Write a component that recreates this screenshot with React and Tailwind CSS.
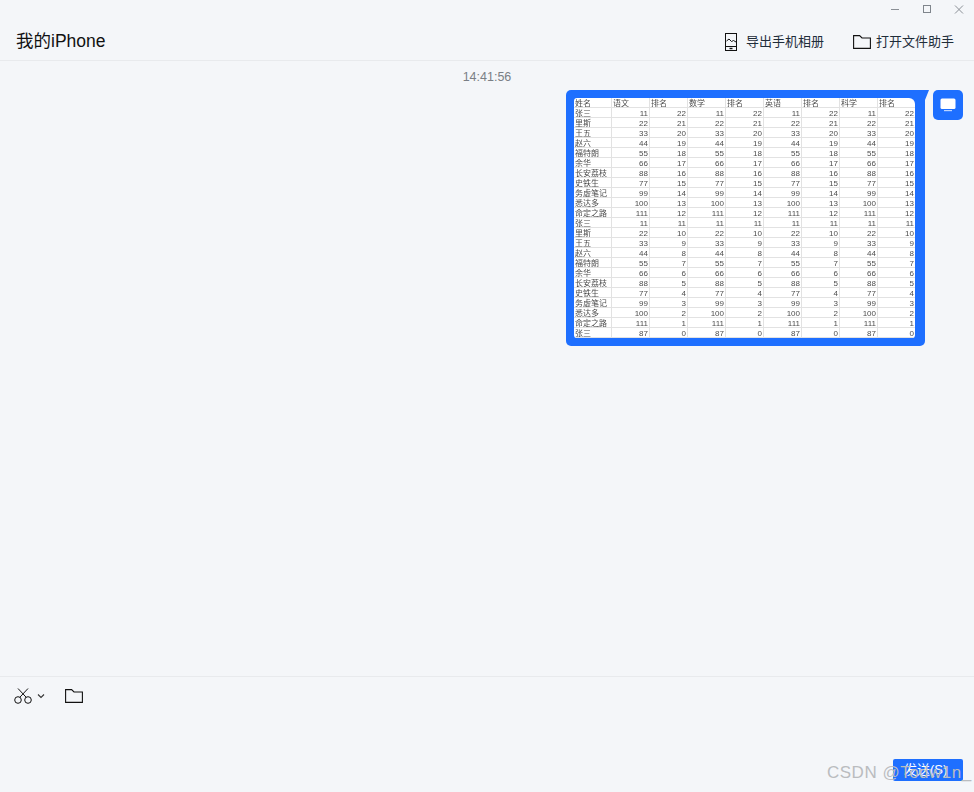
const names = ['张三', '里斯', '王五', '赵六', '福特朗', '余华', '长安荔枝', '史铁生', '务虚笔记', '悉达多', '命定之路'];
const scores = [11, 22, 33, 44, 55, 66, 88, 77, 99, 100, 111];
const headers = ['姓名', '语文', '排名', '数学', '排名', '英语', '排名', '科学', '排名'];

const rows = [];
for (let i = 0; i < 23; i++) {
  const n = i === 22 ? 0 : i % 11;
  rows.push({ name: names[n], score: i === 22 ? 87 : scores[n], rank: 22 - i });
}

function Cell({ children, right, head }) {
  return (
    <div className={`h-[10px] border-r border-b border-[#e2e2e2] px-[1px] overflow-hidden whitespace-nowrap ${head ? 'leading-[11px]' : 'leading-[12px]'} ${right ? 'text-right' : 'text-left'}`}>
      {children}
    </div>
  );
}

function SheetPreview() {
  return (
    <div className="grid grid-cols-[repeat(9,38px)] w-[341px] h-[240px] bg-white rounded-tl-[3px] rounded-tr-[6px] rounded-b-[3px] overflow-hidden text-[8px] text-[#4d4d4d] blur-[0.3px] font-['Liberation_Sans','Noto_Sans_CJK_SC',sans-serif]">
      {headers.map((h, i) => (
        <Cell key={i} head>{h}</Cell>
      ))}
      {rows.map((r, i) => (
        <div key={i} className="contents">
          <Cell>{r.name}</Cell>
          {[0, 1, 2, 3].map((c) => (
            <div key={c} className="contents">
              <Cell right>{r.score}</Cell>
              <Cell right>{r.rank}</Cell>
            </div>
          ))}
        </div>
      ))}
    </div>
  );
}

function FolderIcon({ className }) {
  return (
    <svg viewBox="0 0 18 14" className={className} fill="none" stroke="#111111" strokeWidth="1.1">
      <path d="M0.6 0.6 H6.6 L9 3 H17.4 V13.4 H0.6 Z" />
    </svg>
  );
}

export default function App() {
  return (
    <div className="relative w-[974px] h-[792px] flex flex-col bg-[#f4f6f9] overflow-hidden font-['Liberation_Sans','Noto_Sans_CJK_SC',sans-serif]">
      {/* title bar */}
      <div className="h-[20px] flex justify-end items-center pr-[10px] gap-[22px]">
        <svg width="10" height="10" viewBox="0 0 10 10" fill="none" stroke="#8a8f96"><path d="M1 4.5 H9" /></svg>
        <svg width="10" height="10" viewBox="0 0 10 10" fill="none" stroke="#7f858c"><rect x="1.5" y="0.5" width="7" height="7" /></svg>
        <svg width="10" height="10" viewBox="0 0 10 10" fill="none" stroke="#8a8f96"><path d="M1 0.5 L9 8.5 M9 0.5 L1 8.5" /></svg>
      </div>

      {/* header */}
      <div className="h-[41px] flex items-center justify-between border-b border-[#e8eaed] pt-[3px] pl-[16px] pr-[20px]">
        <span className="text-[17.5px] text-[#111111]">我的iPhone</span>
        <div className="flex items-center gap-[29px] text-[13px] text-[#1f2d3a]">
          <div className="flex items-center gap-[9px]">
            <svg width="12" height="18" viewBox="0 0 12 18" fill="none" stroke="#111111" strokeWidth="1">
              <rect x="0.5" y="0.5" width="11" height="17" />
              <path d="M0.5 13.5 H11.5" />
              <path d="M1.5 8 L4 6 L6.5 8.5 L8.5 7.5 L11 9" />
              <path d="M4.5 15.5 H7.5" strokeWidth="1.4" />
            </svg>
            <span>导出手机相册</span>
          </div>
          <div className="flex items-center gap-[5px]">
            <FolderIcon className="w-[18px] h-[14px]" />
            <span>打开文件助手</span>
          </div>
        </div>
      </div>

      {/* messages */}
      <div className="flex-1 flex flex-col">
        <div className="h-[29px] pt-[4px] flex items-center justify-center text-[12.5px] text-[#7a7f85]">14:41:56</div>
        <div className="flex justify-end items-start gap-[8px] pr-[11px]">
          <div className="relative p-[8px] pr-[10px] bg-[#1e6fff] rounded-tl-[5px] rounded-b-[5px]">
            <svg className="absolute top-0 right-[-4px]" width="4" height="10" viewBox="0 0 4 10" fill="#1e6fff"><path d="M0 0 H4 L0 10 Z" /></svg>
            <SheetPreview />
          </div>
          <div className="w-[30px] h-[30px] flex items-center justify-center rounded-[5px] bg-[#1e6fff]">
            <svg width="16" height="14" viewBox="0 0 16 14" fill="#ffffff">
              <rect x="0.5" y="0.5" width="15" height="10.5" rx="1.5" />
              <rect x="4" y="12" width="8" height="1.2" opacity="0.7" />
            </svg>
          </div>
        </div>
      </div>

      {/* input area */}
      <div className="h-[116px] flex flex-col border-t border-[#e8eaed]">
        <div className="flex items-center pl-[14px] pt-[11px]">
          <svg width="18" height="16" viewBox="0 0 18 16" fill="none" stroke="#111111" strokeWidth="1">
            <circle cx="4" cy="12" r="3.3" />
            <circle cx="14" cy="12" r="3.3" />
            <path d="M5.8 9.3 L14 0.5 M12.2 9.3 L4 0.5" />
          </svg>
          <svg className="ml-[5px]" width="8" height="6" viewBox="0 0 8 6" fill="none" stroke="#333333" strokeWidth="1.1"><path d="M1 1.5 L4 4.5 L7 1.5" /></svg>
          <FolderIcon className="ml-[20px] w-[18px] h-[14px]" />
        </div>
        <div className="flex-1 flex justify-end items-end pr-[11px] pb-[11px]">
          <button className="w-[70px] h-[22px] pl-[11px] rounded-[2px] bg-[#1e6fff] text-white text-[13px] leading-[20px] text-left">发送(S)</button>
        </div>
      </div>

      {/* watermark */}
      <div className="absolute left-[827px] top-[762px] text-[17px] leading-[22px] tracking-[0.5px] text-[#babcbf] whitespace-nowrap">CSDN @Todw1n_</div>
    </div>
  );
}
